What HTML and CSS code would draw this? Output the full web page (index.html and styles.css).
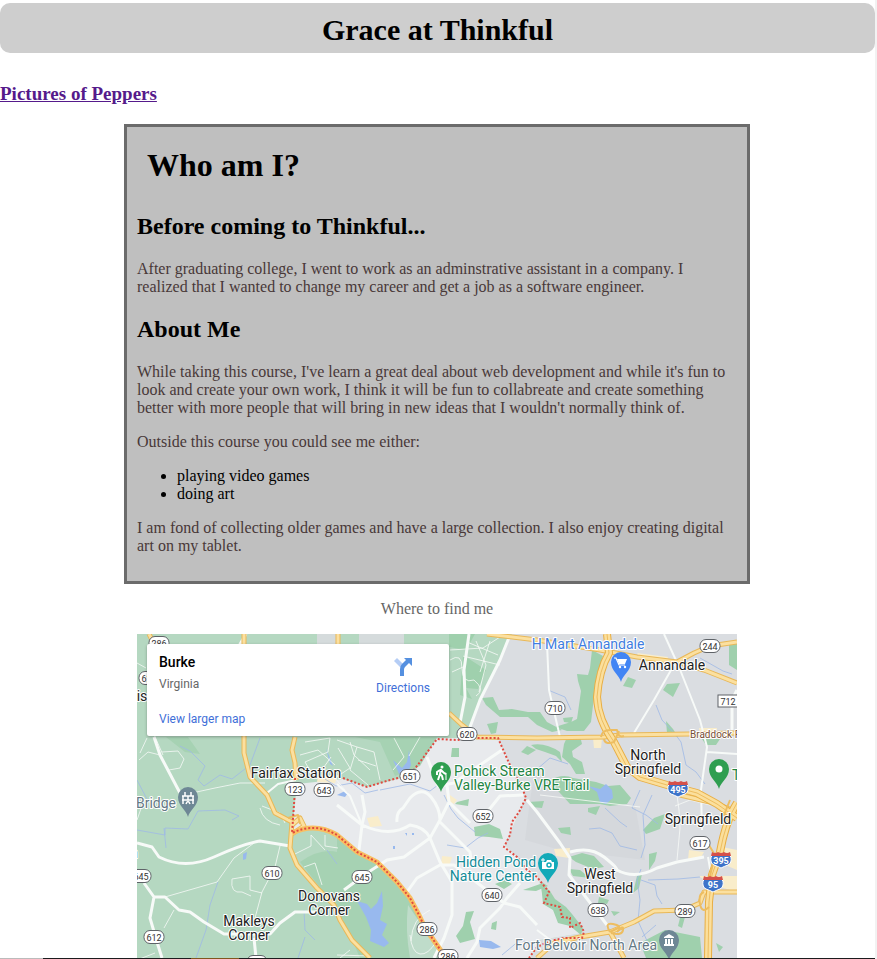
FILE: index.html
```html
<!DOCTYPE html>
<html lang="en">
<head>
<meta charset="utf-8">
<meta name="viewport" content="width=device-width, initial-scale=1">
<title>Grace at Thinkful</title>
<link rel="stylesheet" href="styles.css">
</head>
<body>
<header class="banner"><h1>Grace at Thinkful</h1></header>
<h3 class="gallery"><a href="#peppers">Pictures of Peppers</a></h3>
<main>
<section class="about">
<h1>Who am I?</h1>
<h2>Before coming to Thinkful...</h2>
<p>After graduating college, I went to work as an adminstrative assistant in a company. I realized that I wanted to change my career and get a job as a software engineer.</p>
<h2>About Me</h2>
<p>While taking this course, I've learn a great deal about web development and while it's fun to look and create your own work, I think it will be fun to collabreate and create something better with more people that will bring in new ideas that I wouldn't normally think of.</p>
<p>Outside this course you could see me either:</p>
<ul>
<li>playing video games</li>
<li>doing art</li>
</ul>
<p>I am fond of collecting older games and have a large collection. I also enjoy creating digital art on my tablet.</p>
</section>
<p class="caption">Where to find me</p>
<section class="map" aria-label="Map of Burke, Virginia">
<svg class="map-art" viewBox="137 634 600 324">
<defs>
<rect id="shield" x="-10" y="-6.500" width="20" height="13" rx="6"/>
<path id="pin" d="M0 17C-1.500 10-10 6-10-3A10 10 0 0 1 10-3C10 6 1.500 10 0 17Z"/>
<g id="interstate"><path fill="#3d73c9" stroke="#fff" d="M-8-5Q0-8 8-5L10-3Q11 3 7 5Q4 6 0 8Q-4 6-7 5Q-11 3-10-3Z"/><path fill="#d5504a" d="M-9-8Q-6-6-3-8Q0-6 3-8Q6-6 9-8L10-4H-10Z"/></g>
</defs>
<rect x="137" y="634" width="600" height="324" fill="#b5d8c1"/>
<!-- land cover -->
<path fill="#dadde1" d="M512 634H737V958H530L540 940 583 933 570 918 545 903 538 877 505 845 526 797 498 738H466L480 700Z"/>
<path fill="#e8eaed" d="M297 784L343 779 367 787 412 775 437 738H498L526 797 505 845 538 877 545 903 570 918 583 933 540 940 530 958H446L425 928 397 882 357 852 337 834 310 827 292 831Z"/>
<path fill="#d5d8dc" d="M535 770L575 800 635 805 645 860 560 850 525 840 530 800Z"/>
<path fill="#d5dbdc" d="M317 634H340V644H317ZM359 634H404V644H359Z"/>
<path fill="#a6d2b3" d="M337 835L357 852 377 862 397 882 419 915 442 958H360L348 930 336 908 318 885 300 862Q320 848 337 852ZM166 737H188L200 754 185 752ZM355 737H437L420 766 395 776 380 742Z"/>
<path fill="#bfdcca" d="M408 905L425 930 442 958H410Q405 930 408 905Z"/>
<path fill="#9fd0ad" d="M463 655L486 670 478 689 466 688 472 699 460 695ZM449 634H475L466 650 449 647ZM592 650L603 656 597 675 594 697 591 722 584 731 567 731 555 727 571 722 577 719 581 691 578 681 577 674 588 675 590 668ZM482 698L493 697 499 710 512 709 528 712 540 712 547 722 562 730 552 732 537 725 528 717 500 717 486 705ZM531 745Q545 742 560 752L562 762 556 756 545 752 536 749ZM568 735L580 736 582 744 572 751 573 757 582 762 585 774H576L570 764 562 757 564 744ZM521 752L527 746 536 750 528 755ZM549 781Q562 773 573 778L596 782 608 786 620 785 631 798 627 804 610 806 600 804H570ZM628 677L636 680 632 688 623 686ZM663 690L667 684 680 683 673 697ZM666 721L673 729 678 737 667 733ZM729 645L737 642V670L729 665ZM702 739H720L716 745H706ZM563 718L573 717 571 723 564 722ZM452 748H459V757H451ZM487 724L498 722 496 733 491 734ZM474 827L489 824 500 829 503 839 489 837 475 836ZM457 802L469 799 468 806 455 804ZM528 802L544 801 542 808 532 807ZM588 808L600 806 596 815 588 812ZM558 828L570 827 571 835 561 833ZM643 830L654 818 665 814 660 829 646 834ZM569 857L582 853 594 856 604 867 593 869 576 862ZM649 854L657 852 655 861 649 870ZM569 869L580 870 590 878 573 876ZM637 876L642 874 639 888 633 893ZM523 890L543 883 548 886 536 891ZM541 884L550 891 555 899 566 907 572 914 583 928 581 935 570 926 558 923 553 910 543 904ZM495 884L505 880 512 884 504 889ZM466 912L474 911 470 922 475 939 460 943 456 936 463 926ZM492 923L497 921 496 930 491 929ZM599 897L609 900 607 904 598 903ZM611 911L620 912 614 916ZM680 918L685 917 682 928 678 926ZM640 943L665 930 700 937 702 958H646ZM716 943L723 947 719 952Z"/>
<!-- commercial areas -->
<path fill="#f9edcb" d="M593 738L602 738 601 748H594ZM367 818L378 816 382 826 370 827ZM442 856L452 857 450 864H441ZM447 793L457 800 454 804 446 800ZM699 728H717L715 737H700ZM637 653L668 657 665 667 644 663ZM699 876L737 876V892L710 884ZM722 847L737 850V870L718 862ZM554 849L570 848 569 858 556 856ZM689 850L704 852 700 859 688 860ZM318 776L338 775 335 783 317 782Z"/>
<!-- water -->
<path fill="#98b9ee" d="M357 901L367 904 371 909 377 903 382 891 383 906 380 920 387 924 382 935 389 943 384 947 370 941 371 930 366 917ZM393 760L402 768 407 762 409 750 411 765 407 774 399 774ZM588 786L600 789 606 784 612 790 613 798 606 804 600 802 597 792ZM479 940L491 941 501 947 493 949 480 947ZM243 854L247 852 246 859 243 860ZM326 748L333 766 330 764ZM337 795L345 791 348 793 345 797ZM405 833L407 833 407 836ZM393 846H395V849H393ZM412 833H414V835H412Z"/>
<g class="water">
<path d="M137 830L165 835 165 828 188 829 198 811 225 810 239 816 232 820M164 828L166 848M218 882L210 905 206 930 196 958M260 738L250 765 232 779 220 775 204 786 198 780 205 766 190 751 180 746M378 790L365 793 352 783 336 786 325 779M380 790L410 784 430 791 438 785M475 832L458 818 451 809 444 795M447 845L465 848 478 838 488 833M548 690L565 697 571 710M536 770L550 758 568 764M656 705L662 720 675 734 681 742 686 765 696 772 705 784M700 658L723 671 732 674M605 808L620 822 627 827M652 795L643 815 645 845 641 858M589 829L600 828 612 833 620 846 637 850M641 869L637 880 640 900 638 921 648 943M641 880L655 885 657 896 662 904M648 880L678 879 700 877M640 790L632 808 646 815 658 824M315 940L305 930 304 910M137 780L148 801M327 850L337 864M502 955L520 940 531 943M610 935L623 948M656 925L642 937M305 937L298 958"/>
</g>
<!-- local streets -->
<g class="street thin">
<path d="M165 897L217 882 234 858 254 843M280 846L275 867 262 892 255 918M174 910L164 928M232 879L250 876 250 890 262 893M232 879Q230 894 242 892L251 896M137 820L144 800M192 793L215 788 240 783 265 783M162 752L178 751 184 759 180 768 169 770M262 806L280 813 285 823M260 808Q263 822 280 825M295 854L311 846V835L325 850M325 835V846L338 848M304 867L315 863 322 885M305 742L330 738 328 752 305 762 312 774M335 765L318 750 300 755M300 776L324 767 331 757M338 748L350 768 335 778 345 790M370 770L354 755 350 742M358 760L376 766M394 738L404 757 393 770M420 737L409 756M337 740L357 747 374 752 380 780M357 747L350 770 368 785M463 656L500 665M467 642L498 655M476 641L486 665 479 692M490 641L480 672M450 660Q462 652 462 668T474 680Q486 690 476 696M450 650L483 648 500 637M452 672L463 667M410 935Q412 953 420 954T436 942M430 910Q412 918 411 941M137 960L155 953M147 738L140 753M340 958L350 950M337 955L370 956M677 795L679 810 680 828 677 860M675 806L690 800 710 805M137 663L146 668M540 795L640 807"/>
<path d="M160 755L148 752 139 760M152 730L163 755"/>
</g>
<g class="street">
<path d="M137 843L152 847 159 857Q185 870 214 857T260 841L290 846M144 883L154 897 165 897 179 910 190 912 204 922 224 934H270L280 923 295 912 317 912M154 897L150 918 157 942 162 958M254 938L256 958M154 737L160 755 180 793M246 634L239 646M337 805L362 825Q390 838 410 825Q425 827 430 838L440 862 452 882V915L444 938 434 958M362 795L365 812 362 825 359 850M344 890L367 873 387 860 404 857 430 838 440 820 449 802 447 785M397 822Q396 812 403 808L410 798Q422 786 431 797T440 820M440 822L460 842 470 852 472 867M407 892L417 878 440 865 454 865 484 888 504 903 520 907 537 925M449 802L470 823M520 883L507 898 500 908 480 928 477 942 467 958M510 635L500 660 480 700 470 727M469 634L464 670 465 697 460 723M502 750L480 765 454 783 438 786 427 757M488 811L500 796 523 795M527 800L537 812 560 843 570 858 569 875 607 925M570 852Q590 846 604 857T617 870Q635 880 657 868L677 862 704 857M737 690L732 700V730"/>
</g>
<g class="street narrow">
<path d="M547 643L549 690 560 737M675 663L654 700 634 733M664 634L679 667 700 720 707 747 701 790 702 830M707 752L737 754M267 793L278 784 296 780M337 784L350 796 362 825M708 857L712 880M537 930L553 942"/>
</g>
<!-- highways -->
<g class="casing">
<path d="M244 634V753L250 777 267 795 275 813 292 822 290 848 297 865 317 888 334 905 340 920 352 940 370 958"/>
<path d="M338 634V644M295 737L292 750 295 763 296 780M449 713L462 725 477 737 537 738 604 737 620 735 690 734 737 733M487 634L537 640 600 650 637 657 677 662 704 670 737 683M677 662L694 653 710 646 737 642M537 958L554 943 580 937 610 932 634 922 654 911 684 910 700 903 704 892 737 892M610 932L624 958M680 795L714 803 737 812"/>
<path d="M149 634L155 646M292 825L300 818 304 826 292 834"/>
</g>
<g class="surface">
<path d="M244 634V753L250 777 267 795 275 813 292 822 290 848 297 865 317 888 334 905 340 920 352 940 370 958"/>
<path d="M338 634V644M295 737L292 750 295 763 296 780M449 713L462 725 477 737 537 738 604 737 620 735 690 734 737 733M487 634L537 640 600 650 637 657 677 662 704 670 737 683M677 662L694 653 710 646 737 642M537 958L554 943 580 937 610 932 634 922 654 911 684 910 700 903 704 892 737 892M610 932L624 958M680 795L714 803 737 812"/>
<path d="M149 634L155 646M292 825L300 818 304 826 292 834"/>
</g>
<g class="freeway">
<path class="outer" d="M607 634L609 653Q599 670 597 697Q598 720 614 742L627 767 640 777 667 785 697 793 717 804 737 818M737 803Q726 820 720 852L712 875 709 902 708 958"/>
<path class="inner" d="M607 634L609 653Q599 670 597 697Q598 720 614 742L627 767 640 777 667 785 697 793 717 804 737 818M737 803Q726 820 720 852L712 875 709 902 708 958"/>
<path class="median" d="M607 634L609 653Q599 670 597 697Q598 720 614 742L627 767 640 777 667 785 697 793 717 804 737 818M737 803Q726 820 720 852L712 875 709 902 708 958"/>
<path class="ramp" d="M601 737Q602 730 610 730H617Q618 738 624 736M604 739Q605 745 614 742L619 731M610 932Q604 922 613 924T618 928 610 932M617 932Q624 924 623 930T611 933M704 892Q698 894 700 904T709 907M730 800L724 815 731 824M288 818L298 815 300 824M707 842L715 855 709 880"/>
</g>
<!-- town boundary -->
<path class="parkway" d="M292 833Q315 822 337 835L357 852 377 862 397 882 410 898 419 915 425 928 437 945 446 958"/>
<path class="boundary" d="M295 778V790L292 833Q315 822 337 835L357 852 377 862 397 882 410 898 419 915 425 928 437 945 446 958M343 778L367 787 390 780 410 775 420 762 437 739 457 740 476 738 498 738 509 763 523 790 526 798 519 812 512 822 510 835 504 847 517 857 527 870 537 877 549 892 544 903 560 907 562 917 570 918V928L580 923 584 932 582 938H564L550 941 537 947 529 958"/>
<!-- route markers -->
<g class="routes">
<use href="#shield" x="159" y="643"/><text x="159" y="647">286</text>
<use href="#shield" x="149" y="678"/><text x="149" y="682">620</text>
<use href="#shield" x="467" y="734"/><text x="467" y="738">620</text>
<use href="#shield" x="410" y="776"/><text x="410" y="780">651</text>
<use href="#shield" x="295" y="789"/><text x="295" y="793">123</text>
<use href="#shield" x="324" y="790"/><text x="324" y="794">643</text>
<use href="#shield" x="483" y="816"/><text x="483" y="820">652</text>
<use href="#shield" x="555" y="708"/><text x="555" y="712">710</text>
<use href="#shield" x="710" y="646"/><text x="710" y="650">244</text>
<rect x="718" y="695" width="24" height="12"/><text x="728" y="705">712</text>
<use href="#shield" x="700" y="843"/><text x="700" y="847">617</text>
<use href="#shield" x="272" y="873"/><text x="272" y="877">610</text>
<use href="#shield" x="362" y="877"/><text x="362" y="881">645</text>
<use href="#shield" x="141" y="876"/><text x="141" y="880">645</text>
<use href="#shield" x="154" y="937"/><text x="154" y="941">612</text>
<use href="#shield" x="427" y="929"/><text x="427" y="933">286</text>
<use href="#shield" x="448" y="956"/><text x="448" y="960">286</text>
<use href="#shield" x="492" y="895"/><text x="492" y="899">640</text>
<use href="#shield" x="598" y="910"/><text x="598" y="914">638</text>
<use href="#shield" x="685" y="911"/><text x="685" y="915">289</text>
<use href="#shield" x="257" y="962"/>
</g>
<g class="interstates">
<use href="#interstate" x="678" y="789"/><text x="678" y="793">495</text>
<use href="#interstate" x="721" y="860"/><text x="721" y="864">395</text>
<use href="#interstate" x="713" y="884"/><text x="713" y="888">95</text>
</g>
<!-- place names -->
<g class="places">
<text x="672" y="670">Annandale</text>
<text x="296" y="778">Fairfax Station</text>
<text x="648" y="760">North</text><text x="648" y="774">Springfield</text>
<text x="698" y="824">Springfield</text>
<text x="600" y="879">West</text><text x="600" y="893">Springfield</text>
<text x="329" y="901">Donovans</text><text x="329" y="915">Corner</text>
<text x="249" y="926">Makleys</text><text x="249" y="940">Corner</text>
<text x="142" y="701">is</text><text x="134" y="858">n</text>
<text class="shop" x="588" y="649">H Mart Annandale</text>
<text class="road" x="690" y="738">Braddock Rd</text>
<text class="sight" x="496" y="867">Hidden Pond</text><text class="sight" x="493" y="881">Nature Center</text>
<text class="landmark" x="156" y="808">Bridge</text>
<text class="landmark" x="586" y="950">Fort Belvoir North Area</text>
<text class="park" x="454" y="776">Pohick Stream</text><text class="park" x="454" y="790">Valley-Burke VRE Trail</text>
<text class="park" x="732" y="780">T</text>
</g>
<!-- pins -->
<g transform="translate(621 665)"><use href="#pin" fill="#4285f4"/><path fill="none" stroke="#fff" stroke-width="1.200" d="M-7-7H-5L-2 0H4"/><path fill="#fff" d="M-4-6H6L4-1H-2Z"/><circle cx="-1" cy="2" r="1.200" fill="#fff"/><circle cx="4" cy="2" r="1.200" fill="#fff"/></g>
<g transform="translate(441 775)"><use href="#pin" fill="#2f9e50"/><circle cx="1" cy="-8" r="1.500" fill="#fff"/><path fill="none" stroke="#fff" stroke-width="2" d="M0-6L-1-1 1 1 2 5M-1-1L-3 5M0-5L3-2 5-1M-1-5L-4-3V0"/><path stroke="#fff" d="M5-2V5"/></g>
<g transform="translate(719 772)"><use href="#pin" fill="#2f9e50"/><circle cy="-3" r="3.500" fill="#fff"/></g>
<g transform="translate(548 866)"><use href="#pin" fill="#12a9b8"/><path fill="#fff" d="M-6-4H-2L-1-6H3L4-4H6V3H-6Z"/><circle cx="1" cy="-1" r="2" fill="none" stroke="#12a9b8" stroke-width="1.500"/><path stroke="#fff" d="M-7-6H-3M-5-8V-4"/></g>
<g transform="translate(188 800)"><use href="#pin" fill="#6e8795"/><path fill="none" stroke="#fff" stroke-width="1.500" d="M-6-4H6M-6 0H6M-3-8V-4M3-8V-4M-5 0V4M5 0V4M-2 4Q0-1 2 4M-5-4V0M0-4V0M5-4V0"/></g>
<g transform="translate(669 943)"><use href="#pin" fill="#6e8795"/><path fill="#fff" d="M-5-6L0-9 5-6V-5H-5ZM-4-4H-2V1H-4ZM-1-4H1V1H-1ZM2-4H4V1H2ZM-5 1H5V3H-5Z"/></g>
</svg>
<div class="place-card">
<div class="place">
<strong>Burke</strong>
<span>Virginia</span>
<a href="#map">View larger map</a>
</div>
<a class="directions" href="#directions">
<svg viewBox="0 0 20 20" aria-hidden="true"><path fill="#b5cdf5" d="M1 4L4 1 11 8 8 11Z"/><path fill="#5590e0" d="M7 19V12Q7 9 9 7L13 3 11 1H19V9L16 6 12 10Q11 11 11 13V19Z"/></svg>
<span>Directions</span>
</a>
</div>
</section>
</main>
<footer class="edge"></footer>
</body>
</html>
```
FILE: styles.css
```css
* { box-sizing: border-box; }
body {
  margin: 0;
  border-right: 2px solid #f2f2f2;
  background: #fff;
  font: 16px/18px "Liberation Serif", "Times New Roman", serif;
  color: #000;
  display: flow-root;
}
.banner {
  margin-top: 3px;
  padding: 9px 10px 5px;
  background: #cecece;
  border-radius: 10px;
  text-align: center;
}
.banner h1 { margin: 0; font-size: 30px; line-height: 36px; }
.gallery { margin: 30px 0 19px; font-size: 19px; line-height: 22px; }
.gallery a { color: #551a8b; }
main { max-width: 627px; margin: 0 auto; padding-right: 1px; }
.about {
  padding: 10px;
  border: 3px solid #6b6b6b;
  background: #bfbfbf;
}
.about h1 { margin: 0; padding: 10px; font-size: 32px; line-height: 36px; }
.about h2 { margin: 20px 0; font-size: 24px; line-height: 27px; }
.about p { margin: 16px 0; color: #483838; }
.about ul { margin: 16px 0; padding-left: 40px; }
.caption { margin: 16px 0; text-align: center; color: #666; }
.map {
  position: relative;
  margin: 0 13px;
  overflow: hidden;
  font-family: Roboto, sans-serif;
}
.map-art { display: block; width: 100%; height: auto; }
.water { fill: none; stroke: #9fb9e6; stroke-width: 1; opacity: .8; }
.street { fill: none; stroke: #f7faf8; stroke-width: 3; stroke-linejoin: round; }
.thin { stroke-width: 1; opacity: .8; }
.narrow { stroke-width: 2; }
.casing { fill: none; stroke: #e9b858; stroke-width: 5; stroke-linejoin: round; }
.surface { fill: none; stroke: #fbe0a0; stroke-width: 3; stroke-linejoin: round; }
.freeway { fill: none; stroke-linejoin: round; }
.outer { stroke: #e8ae43; stroke-width: 8; }
.inner { stroke: #fbdf9c; stroke-width: 6; }
.median { stroke: #edbd60; stroke-width: 1; }
.ramp { stroke: #edbd60; stroke-width: 2; }
.parkway { fill: none; stroke: #f9bf62; stroke-width: 5; }
.boundary { fill: none; stroke: #e04a40; stroke-width: 2; stroke-dasharray: 2 2; }
.routes { fill: #fff; stroke: #5f6368; stroke-width: 1; }
.routes text { fill: #333; stroke: none; font-size: 9px; text-anchor: middle; }
.interstates text { fill: #fff; font-size: 9px; font-weight: 700; text-anchor: middle; }
.places { font-size: 14px; }
.places text {
  fill: #222;
  stroke: #fff;
  stroke-width: 2;
  stroke-linejoin: round;
  paint-order: stroke;
  text-anchor: middle;
}
.places .shop { fill: #3f7de0; }
.places .road { fill: #795035; font-size: 10px; text-anchor: start; }
.places .sight { fill: #138c98; }
.places .landmark { fill: #647985; }
.places .park { fill: #238444; text-anchor: start; }
.place-card {
  position: absolute;
  top: 10px;
  left: 10px;
  display: flex;
  justify-content: space-between;
  width: 302px;
  height: 92px;
  padding: 9px 19px 8px 12px;
  background: #fff;
  border-radius: 2px;
  box-shadow: 0 1px 3px rgba(0, 0, 0, .3);
  font-size: 12px;
}
.place { display: flex; flex-direction: column; }
.place strong { font-size: 14px; font-weight: 500; }
.place span { margin-top: 4px; color: #666; }
.place a { margin-top: auto; }
.place-card a { color: #3f6fd8; text-decoration: none; }
.directions { display: flex; flex-direction: column; align-items: center; padding-top: 4px; }
.directions svg { width: 20px; height: 20px; }
.directions span { margin-top: 2px; }
.edge {
  height: 1px;
  background: linear-gradient(90deg, #bbb 43px, #1c1c1e 43px 191px, #80561f 191px 239px, #1c1c1e 239px);
}
```
